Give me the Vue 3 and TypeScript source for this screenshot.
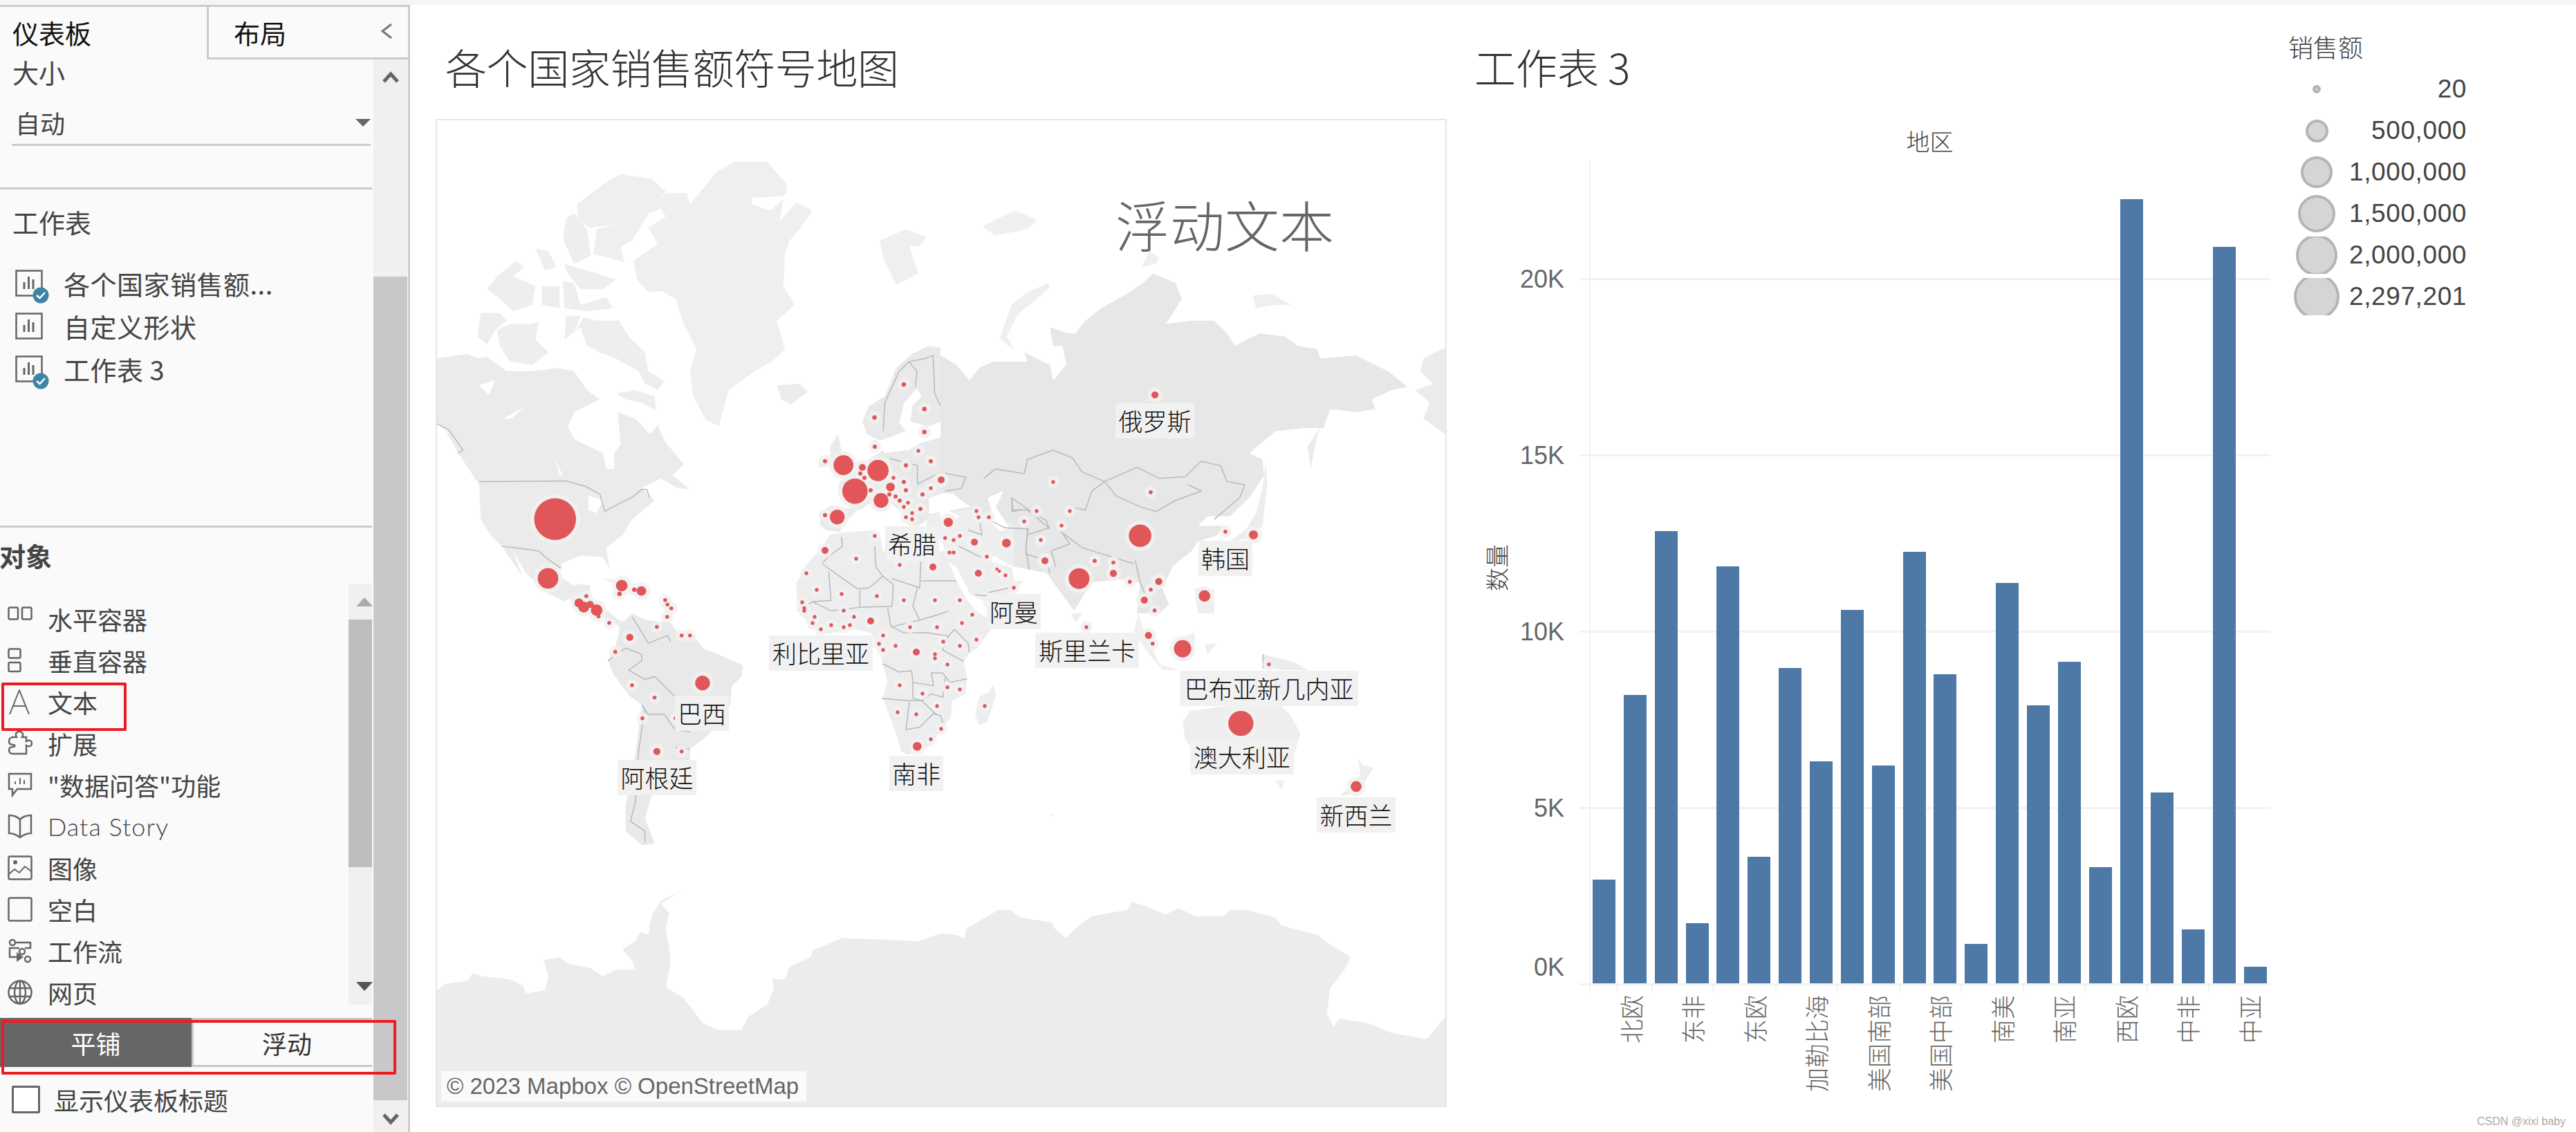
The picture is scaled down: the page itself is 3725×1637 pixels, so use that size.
<script setup lang="ts">
type Dot = number[]
type Shape = { f: string; p: string }
type Zone = { x: number; y: number; s: number; sy: number }

const Z7: Zone = { x: 630, y: 172, s: 1 / 2.148, sy: 1 / 2.193 }
const Z8: Zone = { x: 1360, y: 172, s: 1 / 2.148, sy: 1 / 2.193 }
const Z9: Zone = { x: 630, y: 887, s: 1 / 2.148, sy: 1 / 2.193 }
const Z10: Zone = { x: 1360, y: 887, s: 1 / 2.148, sy: 1 / 2.193 }
const Z12: Zone = { x: 1100, y: 640, s: 1 / 3, sy: 1 / 3 }
const tf = (z: Zone) => `translate(${z.x} ${z.y}) scale(${z.s} ${z.sy})`

const layers = [
  {
    t: tf(Z7),
    land: [
      { f: '#efefef', p: '850,195 870,170 930,135 1030,135 1050,160 1090,205 1090,235 1080,245 985,250 980,270 1040,290 1080,255 1068,325 1120,265 1170,290 1130,350 1100,385 1085,430 1080,530 1115,590 1060,640 1085,730 1045,770 990,800 910,860 880,975 840,955 800,880 790,800 810,730 770,650 745,570 700,545 660,550 625,510 615,450 690,395 660,345 715,310 700,285 660,300 715,235 780,235 790,270 840,210' },
      { f: '#efefef', p: '440,270 530,200 575,175 670,190 715,230 665,295 610,385 575,405 585,455 520,435 490,430 500,350 560,335 480,345 440,320' },
      { f: '#eeeeee', p: '405,315 430,300 470,350 482,435 430,460 395,380' },
      { f: '#eeeeee', p: '310,410 350,420 375,470 340,480' },
      { f: '#eeeeee', p: '160,540 190,500 250,450 275,470 240,500 310,530 300,590 240,610 200,570' },
      { f: '#eeeeee', p: '330,530 385,530 385,600 330,590' },
      { f: '#eeeeee', p: '395,515 430,520 450,590 530,565 550,600 470,610 400,600' },
      { f: '#eeeeee', p: '400,460 470,480 560,510 520,540 450,540 410,490' },
      { f: '#eeeeee', p: '140,615 200,615 220,640 185,670 160,715 130,690' },
      { f: '#eeeeee', p: '190,670 230,650 300,650 320,640 310,700 350,740 300,780 230,770 200,720' },
      { f: '#eeeeee', p: '405,625 450,625 430,680 460,630 500,640 570,640 600,690 650,740 660,800 710,830 690,860 650,840 630,800 560,760 510,740 470,720 450,660 400,700' },
      { f: '#ebebeb', p: '0,760 100,745 130,760 160,755 220,800 300,800 380,790 430,800 470,860 510,890 430,930 410,975 430,1015 520,1060 530,1110 555,1110 555,1060 575,1030 565,930 620,950 665,1000 690,970 710,1020 770,1095 735,1130 790,1175 750,1170 700,1140 640,1170 680,1210 610,1270 580,1320 530,1360 540,1430 520,1390 450,1385 390,1410 385,1450 450,1495 400,1530 340,1500 280,1440 240,1370 270,1450 205,1355 170,1320 140,1270 135,1160 70,1060 30,985 0,965' },
      { f: '#eeeeee', p: '560,870 620,860 680,880 685,925 640,900 590,890' },
      { f: '#ebebeb', p: '385,1440 400,1500 440,1475 480,1480 475,1530 520,1550 570,1590 610,1600 590,1620 540,1590 480,1560 420,1530' },
      { f: '#efefef', p: '510,1455 570,1465 610,1490 560,1475' },
      { f: '#efefef', p: '610,1490 660,1500 640,1510' },
      { f: '#efefef', p: '1380,385 1460,350 1525,375 1500,405 1470,400 1500,490 1430,525 1390,440' },
      { f: '#ececec', p: '1060,845 1130,840 1155,865 1105,905 1075,890' },
      { f: '#ebebeb', p: '1225,1040 1250,1000 1262,1060 1295,1110 1260,1130 1230,1110' },
      { f: '#ebebeb', p: '1190,1080 1225,1065 1225,1100 1190,1105' },
      { f: '#e9e9e9', p: '1325,960 1345,910 1395,880 1430,790 1480,745 1530,720 1568,725 1568,960 1530,975 1475,960 1480,910 1510,880 1495,855 1455,900 1440,965 1460,990 1410,1010 1380,1020 1340,1000' },
      { f: '#eaeaea', p: '1195,1250 1230,1225 1310,1240 1270,1280 1255,1310 1215,1305 1195,1290' },
      { f: '#e9e9e9', p: '1290,1235 1250,1180 1255,1150 1330,1090 1390,1050 1350,1020 1370,1020 1395,1060 1470,1050 1500,1030 1568,1010 1600,1290 1540,1260 1500,1290 1470,1290 1450,1250 1410,1215 1360,1210 1320,1240' },
    ],
    water: [
      '135,845 185,828 165,875',
      '210,950 275,915 235,950',
      '370,1080 395,1130 385,1130',
      '475,1195 520,1210 500,1250 475,1240',
    ],
    lines: [
      '135,1150 150,1150 405,1148 465,1165 510,1190 525,1245 560,1225 610,1200 640,1175 655,1175 665,1200',
      '205,1355 250,1360 320,1370 340,1390 390,1425',
      '0,965 40,985 85,1050 70,1060',
      '1390,990 1395,900 1440,800 1470,770 1495,800 1490,850',
      '1470,770 1520,760 1545,750 1550,870 1568,910',
    ],
  },
  {
    t: tf(Z8),
    land: [
      { f: '#e7e7e7', p: '0,750 50,780 90,830 120,790 160,770 240,770 270,770 260,740 340,780 350,830 390,780 380,720 350,720 340,660 395,680 420,680 450,640 500,600 570,560 630,520 660,490 730,520 750,570 700,650 780,640 850,640 890,680 915,720 990,680 1070,690 1110,720 1170,730 1180,760 1290,750 1390,800 1450,850 1400,860 1340,890 1350,920 1290,930 1210,920 1190,980 1130,980 1040,990 960,1060 1000,1080 1005,1130 960,1200 900,1260 830,1260 800,1290 880,1290 860,1320 800,1340 780,1370 720,1420 690,1490 710,1540 680,1568 610,1568 620,1470 560,1460 470,1470 415,1560 350,1470 330,1440 230,1420 210,1400 140,1380 60,1310 0,1320' },
      { f: '#efefef', p: '335,520 340,535 240,620 205,690 230,730 210,720 185,695 220,590 270,550' },
      { f: '#efefef', p: '970,560 1030,555 1090,590 1040,590 980,600' },
      { f: '#f0f0f0', p: '130,340 230,290 300,320 270,350 170,370' },
      { f: '#ededed', p: '1010,1090 1015,1160 1000,1290 960,1330 900,1340 950,1300 980,1250 1000,1170' },
      { f: '#ebebeb', p: '1215,920 1170,1000 1150,1110 1140,1040' },
      { f: '#ebebeb', p: '1568,725 1500,760 1490,800 1530,840 1475,860 1520,900 1500,950 1568,1000' },
      { f: '#efefef', p: '625,470 650,420 680,440 670,460' },
      { f: '#eeeeee', p: '790,1490 850,1490 850,1568 800,1568' },
    ],
    water: ['0,1230 60,1260 20,1290 0,1270'],
    lines: [
      '135,1140 170,1110 260,1125 270,1080 350,1050 410,1075 440,1120 510,1150 470,1180 450,1240 400,1230',
      '510,1150 610,1105 680,1140 760,1135 810,1085 870,1100 890,1150 945,1160 930,1200 850,1270',
      '510,1150 545,1195 620,1230 670,1245 730,1210 810,1180 770,1160',
      '605,1400 620,1470 650,1540',
      '220,1200 225,1240 270,1240 340,1300',
      '375,1310 440,1360 600,1410',
      '270,1300 265,1380 330,1400 340,1440',
    ],
  },
  {
    t: tf(Z9),
    land: [
      { f: '#e9e9e9', p: '570,40 610,0 650,20 730,30 750,60 800,70 830,110 900,140 955,165 950,200 920,230 915,290 860,370 830,400 790,430 790,470 700,480 670,580 650,650 680,730 640,735 590,690 590,610 620,450 640,290 600,260 550,190 535,150 560,100 570,60' },
      { f: '#ececec', p: '0,1200 30,1175 100,1165 115,1140 140,1150 230,1160 270,1180 280,1205 340,1195 350,1150 335,1100 385,1090 410,1110 480,1125 520,1150 560,1130 620,1130 610,1100 580,1065 620,1040 635,1010 660,1020 670,960 700,910 765,880 700,920 725,950 715,1000 725,1060 730,1110 715,1185 770,1220 830,1300 875,1320 950,1322 970,1280 1030,1240 1050,1190 1045,1160 1085,1160 1100,1120 1165,1090 1170,1070 1260,1030 1400,1035 1500,1040 1568,1015 1568,1600 0,1600' },
    ],
    water: [],
    lines: [
      '610,10 640,60 660,95 720,70 730,90',
      '535,150 590,110 640,130 640,150 600,180 650,210 680,200 730,250 745,265',
      '640,290 660,320 710,320 745,370 790,375',
      '650,300 630,440 620,600 605,660 650,690 650,725',
      '745,425 790,430',
    ],
  },
  {
    t: tf(Z10),
    land: [
      { f: '#ececec', p: '0,1015 50,1020 75,1030 80,1000 130,970 180,940 215,940 250,965 345,980 355,1000 390,1030 430,990 470,960 580,940 595,915 640,930 700,955 740,935 790,960 880,960 900,940 950,940 1040,965 1060,990 1170,1020 1210,1050 1275,1090 1255,1130 1210,1190 1200,1270 1220,1310 1240,1285 1330,1300 1400,1330 1510,1350 1568,1280 1568,1570 0,1570' },
      { f: '#eeeeee', p: '752,345 775,310 880,295 1060,295 1085,320 1118,380 1100,440 1060,500 1000,500 900,480 780,430 760,400' },
      { f: '#efefef', p: '1040,530 1070,530 1058,560' },
      { f: '#eeeeee', p: '1295,455 1310,480 1345,490 1320,530 1290,570 1240,580 1280,540 1305,510' },
      { f: '#eeeeee', p: '165,225 172,260 145,345 120,355 108,320 120,265 150,250' },
      { f: '#f0f0f0', p: '615,0 630,50 680,160 740,180 690,180 640,120 600,60' },
      { f: '#f0f0f0', p: '720,90 790,60 790,130 740,150' },
      { f: '#f0f0f0', p: '820,100 860,95 830,130' },
      { f: '#ececec', p: '1000,130 1100,155 1140,180 1060,180 1000,170' },
      { f: '#f0f0f0', p: '340,635 358,640 345,645' },
      { f: '#eeeeee', p: '405,0 440,0 420,30' },
    ],
    water: [],
    lines: ['1002,130 1002,175'],
  },
  {
    t: tf(Z12),
    land: [
      { f: '#ededed', p: '255,470 300,400 360,390 490,380 520,420 530,470 620,480 700,480 800,470 820,530 850,600 880,650 930,730 980,760 1000,810 940,890 905,915 880,950 895,1020 890,1090 830,1120 825,1190 780,1250 730,1320 640,1355 610,1340 590,1270 560,1190 530,1110 550,1040 530,960 510,890 480,825 400,810 280,830 225,800 160,730 155,610 205,520' },
      { f: '#eeeeee', p: '720,320 800,300 900,290 1000,340 1100,350 1100,540 1060,520 1010,490 960,480 990,510 1090,545 1100,600 1140,600 1090,650 985,690 930,670 880,640 840,570 800,490 790,420 720,370' },
      { f: '#eeeeee', p: '1395,775 1430,790 1425,815 1400,815' },
    ],
    water: [
      '730,240 790,220 830,220 910,280 870,285 800,300 730,310',
      '985,240 1050,210 1040,240 1020,280 1080,370 1040,385 990,340 1000,290',
      '815,520 850,540 905,650 930,720 900,690 860,620',
    ],
    lines: [
      '265,525 420,635 470,630 530,580 500,540 495,450',
      '295,560 305,685 225,690',
      '530,580 575,615 570,710 430,715 430,640',
      '570,590 690,630 695,500',
      '695,600 850,600',
      '680,630 660,710 690,770 565,800 550,715',
      '815,730 790,740 690,770',
      '570,800 620,825 725,825 815,840 840,810 900,870 905,910',
      '815,840 790,900 880,950',
      '530,960 600,995 655,990 660,1040 750,1055 740,1000 790,1000 820,1040 895,1025',
      '525,1110 640,1120 700,1120 740,1090 790,1105 800,1020',
      '645,1125 630,1245 690,1235 750,1175 780,1185 790,1215',
      '660,1040 660,1110 700,1120',
      '700,1120 760,1180',
      '160,730 225,690 305,730 430,715',
      '560,70 680,100 680,180 780,130 890,150 870,200 800,210',
      '900,380 960,400 950,350',
      '860,450 960,500',
      '1160,370 1150,460 1165,550',
      '1090,240 1160,290 1240,340 1250,370 1160,400',
      '1300,380 1340,440 1260,470 1280,540',
      '1090,240 1090,300 1130,290',
      '930,660 985,665',
      '990,650 1080,630',
      '1000,340 1060,370 1160,375',
      '350,410 355,450 300,490 270,520',
    ],
  },
]

const conv = (z: Zone, list: Dot[]) =>
  list.map(([x, y, r]) => ({ x: z.x + x * z.s, y: z.y + y * z.sy, r: r * z.s }))

const dots = [
  ...conv(Z12, [
    [359, 98, 43], [509, 121, 46], [409, 211, 55], [522, 251, 32], [332, 323, 32], [441, 108, 15], [279, 81, 9], [279, 315, 9],
    [432, 134, 9], [450, 153, 9], [477, 207, 9], [558, 225, 9], [576, 153, 8], [630, 99, 9], [684, 36, 8], [738, 81, 9], [495, 18, 9],
    [783, 162, 15], [621, 171, 9], [702, 225, 9], [738, 198, 8], [630, 207, 9], [585, 234, 9], [603, 252, 9], [639, 261, 8], [693, 288, 9],
    [657, 306, 8], [621, 279, 8], [630, 324, 8], [657, 333, 8], [563, 193, 19], [814, 346, 20], [936, 297, 8], [945, 324, 8], [990, 324, 8],
    [864, 405, 8], [800, 414, 8], [837, 423, 8], [819, 477, 8], [837, 477, 8], [927, 432, 15], [1066, 436, 19], [981, 495, 8], [1025, 549, 7],
    [1035, 558, 7], [1062, 576, 8], [944, 567, 15], [1098, 630, 8], [990, 693, 8], [1233, 513, 15], [1215, 423, 8], [1143, 342, 8], [1197, 297, 8],
    [1341, 297, 8], [1305, 360, 8], [1269, 171, 8], [1381, 590, 45], [1449, 513, 8], [1413, 801, 8], [279, 468, 15], [495, 405, 8], [414, 504, 8],
    [603, 531, 8], [747, 540, 15], [198, 567, 8], [243, 639, 8], [351, 657, 8], [504, 666, 8], [621, 684, 8], [756, 684, 8], [864, 684, 8],
    [918, 747, 8], [873, 783, 8], [936, 855, 8], [180, 693, 8], [189, 718, 8], [189, 730, 8], [234, 756, 8], [225, 783, 8], [261, 810, 8],
    [306, 792, 8], [360, 729, 8], [360, 801, 8], [387, 792, 8], [405, 756, 8], [477, 774, 15], [531, 837, 8], [513, 873, 8], [531, 900, 8],
    [585, 882, 8], [675, 909, 15], [648, 801, 8], [765, 801, 8], [792, 864, 8], [864, 882, 8], [756, 918, 8], [756, 936, 8], [810, 963, 8],
    [603, 1053, 8], [702, 1089, 8], [810, 1062, 8], [864, 1071, 8], [765, 1143, 8], [594, 1170, 8], [675, 1179, 8], [783, 1242, 8], [738, 1287, 8],
    [679, 1318, 19], [972, 1143, 8],
  ]),
  ...conv(Z8, [
    [666, 875, 11], [653, 1184, 6], [620, 1322, 35], [885, 1309, 6], [972, 1319, 14], [537, 1407, 6], [537, 1441, 11], [479, 1402, 6], [588, 1468, 6],
    [678, 1467, 11], [653, 1493, 6], [633, 1526, 11], [820, 1513, 18], [665, 1559, 6],
  ]),
  ...conv(Z10, [[646, 70, 11], [659, 96, 6], [752, 112, 27], [1020, 162, 6], [933, 349, 39], [1291, 549, 17]]),
  ...conv(Z9, [
    [829, 221, 23], [603, 76, 11], [687, 43, 6], [764, 70, 6], [790, 70, 6], [558, 122, 6], [610, 228, 6], [680, 267, 6], [642, 333, 6],
    [745, 333, 6], [687, 438, 11], [764, 438, 6], [539, 30, 6], [506, 10, 6], [719, 11, 6],
  ]),
  ...conv(Z7, [
    [371, 1269, 65], [349, 1457, 32], [578, 1480, 18], [571, 1506, 7], [617, 1493, 7], [639, 1497, 15], [713, 1526, 6], [720, 1540, 6], [732, 1552, 6],
    [468, 1513, 6], [445, 1535, 14], [460, 1548, 17], [480, 1540, 11], [500, 1558, 18], [1454, 842, 7], [1518, 920, 7], [1363, 947, 7], [1518, 993, 7],
  ]),
]

const OX = 632
const OY = 174
const places = [
  { n: '俄罗斯', x: 1613, y: 583, w: 114 },
  { n: '希腊', x: 1280, y: 761, w: 78 },
  { n: '韩国', x: 1733, y: 782, w: 78 },
  { n: '阿曼', x: 1427, y: 859, w: 78 },
  { n: '利比里亚', x: 1112, y: 919, w: 150 },
  { n: '斯里兰卡', x: 1497, y: 915, w: 150 },
  { n: '巴布亚新几内亚', x: 1706, y: 970, w: 258 },
  { n: '巴西', x: 976, y: 1006, w: 78 },
  { n: '澳大利亚', x: 1721, y: 1069, w: 150 },
  { n: '南非', x: 1286, y: 1093, w: 78 },
  { n: '阿根廷', x: 893, y: 1099, w: 114 },
  { n: '新西兰', x: 1904, y: 1153, w: 114 },
].map((p) => ({ ...p, style: { left: `${p.x - OX}px`, top: `${p.y - OY}px`, width: `${p.w}px` } }))

const tops = [1273, 1006, 769, 1336, 820, 1240, 967, 1102, 883, 1108, 799, 976, 1366, 844, 1021, 958, 1255, 289, 1147, 1345, 358, 1399]
const names = ['', '北欧', '', '东非', '', '东欧', '', '加勒比海', '', '美国南部', '', '美国中部', '', '南美', '', '南亚', '', '西欧', '', '中非', '', '中亚']
const bars = tops.map((t, i) => ({ name: names[i], h: 1423 - t, tick: i < 3 || i % 2 === 0 }))
const yTicks = [0, 5, 10, 15, 20].map((k) => ({ label: `${k}K`, bottom: k * 51 - 1.5 }))

const legend = [
  { v: '20', d: 12 },
  { v: '500,000', d: 33 },
  { v: '1,000,000', d: 46 },
  { v: '1,500,000', d: 54 },
  { v: '2,000,000', d: 60 },
  { v: '2,297,201', d: 66 },
]
const sheets = [
  { n: '各个国家销售额...', done: true },
  { n: '自定义形状', done: false },
  { n: '工作表 3', done: true },
]
const objects = ['水平容器', '垂直容器', '文本', '扩展', '"数据问答"功能', 'Data Story', '图像', '空白', '工作流', '网页']
</script>

<template>
  <div class="page">
    <div class="strip"></div>
    <div class="body">
      <aside class="side">
        <div class="tabs">
          <div class="tab active">仪表板</div>
          <div class="tab other">
            <span>布局</span>
            <svg class="collapse" viewBox="0 0 18 24"><path d="M16 2 L3 12 L16 22" fill="none" stroke="#777" stroke-width="3" /></svg>
          </div>
        </div>
        <div class="side-main">
          <div class="panel">
            <section class="size">
              <div class="h">大小</div>
              <div class="select"><span>自动</span><i class="caret"></i></div>
            </section>
            <section class="sheets">
              <div class="h">工作表</div>
              <ul class="sheet-list">
                <li v-for="s in sheets" :key="s.n">
                  <svg class="sheet-ico" viewBox="0 0 50 50">
                    <rect x="1.5" y="1.5" width="37" height="36" fill="none" stroke="#666" stroke-width="2.5" />
                    <path d="M13 28V18 M19.500 28V10 M26 28V14" stroke="#666" stroke-width="3" />
                    <template v-if="s.done">
                      <circle cx="37" cy="37" r="11.500" fill="#3f84a4" />
                      <path d="M31 37 L35.500 41 L43 33" fill="none" stroke="#fff" stroke-width="2.500" />
                    </template>
                  </svg>
                  <span>{{ s.n }}</span>
                </li>
              </ul>
            </section>
            <section class="objects">
              <div class="obj-h">对象</div>
              <div class="obj-wrap">
                <ul class="obj-list">
                  <li v-for="(o, i) in objects" :key="o" :class="{ latin: o === 'Data Story', marked: i === 2 }">
                    <svg class="ico" viewBox="0 0 36 36" fill="none" stroke="#666" stroke-width="2.500">
                      <g v-if="i === 0"><rect x="1.500" y="1.500" width="13.500" height="17" rx="2" /><rect x="21" y="1.500" width="13.500" height="17" rx="2" /></g>
                      <g v-else-if="i === 1"><rect x="1.500" y="1.500" width="17" height="13" rx="2" /><rect x="1.500" y="21" width="17" height="13" rx="2" /></g>
                      <path v-else-if="i === 2" d="M3 36 L17 1 L31 36 M8 24 H26" stroke-width="2" />
                      <path v-else-if="i === 3" d="M13 9 C10 3 14 1 17 1 C20 1 24 3 21 9 H27 V15 C32 12 35 15 35 18 C35 21 32 24 27 21 V33 H7 C3 33 2 30 2 27 C2 25 4 23 8 23 C11 23 11 20 8 20 C4 20 2 18 2 15 C2 11 5 9 8 9 Z" />
                      <g v-else-if="i === 4"><path d="M2 2 H34 V24 H14 L7 33 V24 H2 Z" /><path d="M11 17V13 M18 17V8 M24 17V11" stroke-width="2" /></g>
                      <g v-else-if="i === 5"><path d="M18 8 C14 4 8 2 2 2 V28 C8 28 14 31 18 34 C22 31 28 28 34 28 V2 C28 2 22 4 18 8 Z M18 8 V34" /></g>
                      <g v-else-if="i === 6"><rect x="1.500" y="1.500" width="33" height="33" rx="2" /><circle cx="11" cy="10" r="3" fill="#666" stroke="none" /><path d="M2 27 L10 20 L17 25 L25 16 L34 23" stroke-width="2" /></g>
                      <rect v-else-if="i === 7" x="1.500" y="1.500" width="33" height="33" rx="2" />
                      <g v-else-if="i === 8">
                        <circle cx="7" cy="6" r="4" /><circle cx="21" cy="19" r="4" /><circle cx="29" cy="30" r="4" />
                        <path d="M11 6 H33 V14 H25 M17 14 H3 V27 H13" />
                        <path d="M13 20 L23 27 L13 34 Z" fill="#666" stroke="none" />
                      </g>
                      <g v-else><circle cx="18" cy="18" r="16.500" /><ellipse cx="18" cy="18" rx="8" ry="16.500" /><path d="M2 12 H34 M2 24 H34 M18 2 V34" /></g>
                    </svg>
                    <span>{{ o }}</span>
                  </li>
                </ul>
                <div class="mini-bar">
                  <i class="up"></i>
                  <i class="thumb"></i>
                  <i class="down"></i>
                </div>
              </div>
              <div class="mode">
                <div class="mode-a">平铺</div>
                <div class="mode-b">浮动</div>
              </div>
              <label class="show"><i class="box"></i><span>显示仪表板标题</span></label>
            </section>
          </div>
          <div class="bar">
            <svg class="arrow" viewBox="0 0 24 20"><path d="M2 17 L12 6 L22 17" fill="none" stroke="#666" stroke-width="5" /></svg>
            <div class="bar-thumb"></div>
            <svg class="arrow dn" viewBox="0 0 24 20"><path d="M2 3 L12 14 L22 3" fill="none" stroke="#666" stroke-width="5" /></svg>
          </div>
        </div>
      </aside>

      <main class="main">
        <div class="map-col">
          <h1 class="title map-title">各个国家销售额符号地图</h1>
          <div class="map">
            <svg class="map-svg" viewBox="632 174 1458 1425" width="1458" height="1425">
              <g v-for="(l, i) in layers" :key="i" :transform="l.t">
                <polygon v-for="(s, j) in (l.land as Shape[])" :key="j" :points="s.p" :fill="s.f" />
              </g>
              <g v-for="(l, i) in layers" :key="'w' + i" :transform="l.t">
                <polygon v-for="(p, j) in l.water" :key="j" :points="p" fill="#fff" />
              </g>
              <g v-for="(l, i) in layers" :key="'l' + i" :transform="l.t">
                <polyline v-for="(p, j) in l.lines" :key="j" :points="p" fill="none" stroke="#b9b9b9" stroke-width="1.500" vector-effect="non-scaling-stroke" />
              </g>
              <circle v-for="(d, i) in dots" :key="'h' + i" :cx="d.x" :cy="d.y" :r="d.r + 6" fill="#f1f1f1" fill-opacity="0.85" />
              <circle v-for="(d, i) in dots" :key="'d' + i" :cx="d.x" :cy="d.y" :r="d.r" fill="#e15759" />
            </svg>
            <span v-for="p in places" :key="p.n" class="place" :style="p.style">{{ p.n }}</span>
            <div class="float-text">浮动文本</div>
            <div class="credit">© 2023 Mapbox © OpenStreetMap</div>
          </div>
        </div>

        <div class="chart-col">
          <h1 class="title chart-title">工作表 3</h1>
          <div class="region">地区</div>
          <div class="chart">
            <div class="axis-name"><span>数量</span></div>
            <div class="plot">
              <div v-for="t in yTicks" :key="t.label" class="grid" :style="{ bottom: t.bottom + 'px' }">
                <span>{{ t.label }}</span>
              </div>
              <div class="bars">
                <div v-for="(b, i) in bars" :key="i" class="cell">
                  <div class="rect" :style="{ height: b.h + 'px' }"></div>
                </div>
              </div>
            </div>
          </div>
          <div class="x-axis">
            <div v-for="(b, i) in bars" :key="i" class="x-cell" :class="{ tick: b.tick }">
              <span v-if="b.name">{{ b.name }}</span>
            </div>
          </div>
        </div>

        <div class="legend">
          <div class="legend-h">销售额</div>
          <div v-for="r in legend" :key="r.v" class="legend-row">
            <div class="slot"><i :style="{ width: r.d + 'px', height: r.d + 'px' }"></i></div>
            <span>{{ r.v }}</span>
          </div>
        </div>
      </main>
    </div>
    <div class="mark">CSDN @xixi baby</div>
  </div>
</template>

<style>
html,
body {
  margin: 0;
  background: #fff;
}
</style>

<style scoped>
* {
  box-sizing: border-box;
}
.page {
  position: relative;
  width: 3725px;
  height: 1637px;
  overflow: hidden;
  display: flex;
  flex-direction: column;
  font-family: "Noto Sans CJK SC", "Noto Sans", sans-serif;
  background: #fff;
}
.strip {
  height: 7px;
  background: #f5f5f5;
  flex: none;
}
.body {
  flex: 1;
  display: flex;
  min-height: 0;
}
.side {
  width: 593px;
  flex: none;
  display: flex;
  flex-direction: column;
  background: #fafafa;
  border-top: 3px solid #ccc;
  border-right: 3px solid #ccc;
  color: #444;
}
.tabs {
  height: 76px;
  flex: none;
  display: flex;
}
.tab {
  font-size: 38px;
  line-height: 74px;
}
.active {
  width: 302px;
  padding-left: 18px;
  color: #111;
  border-right: 3px solid #ccc;
}
.other {
  flex: 1;
  position: relative;
  padding-left: 36px;
  color: #111;
  border-bottom: 3px solid #ccc;
}
.collapse {
  position: absolute;
  left: 248px;
  top: 23px;
  width: 18px;
  height: 24px;
}
.side-main {
  flex: 1;
  display: flex;
  min-height: 0;
}
.panel {
  width: 538px;
  flex: none;
  display: flex;
  flex-direction: column;
}
.h {
  font-size: 38px;
  line-height: 40px;
  padding-left: 18px;
}
.size {
  height: 188px;
  border-bottom: 3px solid #ccc;
}
.size .h {
  margin-top: -2px;
}
.select {
  margin: 30px 2px 0 17px;
  height: 57px;
  display: flex;
  align-items: center;
  justify-content: space-between;
  padding: 0 0 8px 5px;
  font-size: 36px;
  border-bottom: 3px solid #ccc;
}
.caret {
  width: 0;
  height: 0;
  border-left: 11px solid transparent;
  border-right: 11px solid transparent;
  border-top: 11px solid #666;
}
.sheets {
  height: 489px;
  padding-top: 27px;
  border-bottom: 3px solid #ccc;
}
.sheet-list {
  list-style: none;
  margin: 37px 0 0;
  padding: 0 0 0 22px;
}
.sheet-list li {
  height: 62px;
  display: flex;
  align-items: center;
  font-size: 38px;
  letter-spacing: 0.5px;
}
.sheet-ico {
  width: 50px;
  height: 50px;
  flex: none;
  margin-right: 20px;
  position: relative;
  top: 6px;
}
.objects {
  flex: 1;
  min-height: 0;
}
.obj-h {
  font-size: 38px;
  font-weight: 700;
  line-height: 40px;
  margin-top: 20px;
  margin-left: -1px;
}
.obj-wrap {
  display: flex;
  justify-content: space-between;
  height: 609px;
  margin-top: 21px;
}
.obj-list {
  list-style: none;
  margin: 0;
  padding: 21px 0 0 11px;
}
.obj-list li {
  height: 60px;
  display: flex;
  align-items: center;
  gap: 22px;
  font-size: 36px;
  white-space: nowrap;
  position: relative;
}
.marked::after {
  content: "";
  position: absolute;
  left: -9px;
  top: 2px;
  width: 173px;
  height: 62px;
  border: 4px solid #ed1c24;
  border-radius: 2px;
}
.latin span {
  font-family: "Lato", sans-serif;
  font-weight: 300;
  letter-spacing: 1px;
}
.ico {
  width: 36px;
  height: 36px;
  flex: none;
}
.mini-bar {
  width: 34px;
  position: relative;
  background: #f0f0f0;
}
.mini-bar i {
  position: absolute;
  display: block;
}
.up {
  left: 11px;
  top: 20px;
  width: 0;
  height: 0;
  border-left: 12px solid transparent;
  border-right: 12px solid transparent;
  border-bottom: 13px solid #aaa;
}
.mini-bar .thumb {
  left: 0;
  right: 0;
  top: 52px;
  height: 358px;
  background: #bdbdbd;
}
.down {
  left: 11px;
  bottom: 20px;
  width: 0;
  height: 0;
  border-left: 12px solid transparent;
  border-right: 12px solid transparent;
  border-top: 13px solid #555;
}
.mode {
  height: 71px;
  margin-top: 19px;
  display: flex;
  font-size: 36px;
  position: relative;
}
.mode::after {
  content: "";
  position: absolute;
  left: 2px;
  top: 3px;
  width: 563px;
  height: 71px;
  border: 4px solid #ed1c24;
  border-radius: 2px;
  z-index: 3;
  pointer-events: none;
}
.mode-a {
  width: 277px;
  background: #666;
  color: #fff;
  text-align: center;
  line-height: 72px;
}
.mode-b {
  flex: 1;
  border: 3px solid #c8c8c8;
  border-right: 0;
  border-top-width: 5px;
  padding-left: 12px;
  color: #333;
  text-align: center;
  line-height: 62px;
}
.show {
  display: flex;
  align-items: center;
  height: 40px;
  margin-top: 27px;
  padding-left: 17px;
  font-size: 36px;
}
.box {
  width: 41px;
  height: 40px;
  background: #fff;
  border: 3px solid #666;
  border-radius: 2px;
  margin-right: 20px;
}
.bar {
  width: 49px;
  flex: none;
  margin-left: 2px;
  display: flex;
  flex-direction: column;
  background: #f0f0f0;
  position: relative;
}
.arrow {
  position: absolute;
  left: 13px;
  top: 15px;
  width: 24px;
  height: 20px;
}
.arrow.dn {
  top: auto;
  bottom: 8px;
  z-index: 2;
}
.bar-thumb {
  margin-top: 314px;
  height: 1191px;
  background: #c8c8c8;
}
.main {
  flex: 1;
  display: flex;
  min-width: 0;
}
.title {
  margin: 0;
  font-size: 60px;
  font-weight: 300;
  line-height: 60px;
  color: #333;
  white-space: nowrap;
}
.map-col {
  width: 1462px;
  margin-left: 37px;
  flex: none;
  padding-top: 59px;
}
.map-title {
  padding-left: 14px;
  letter-spacing: -0.4px;
}
.map {
  position: relative;
  width: 1462px;
  height: 1429px;
  margin-top: 46px;
  border: 2px solid #e6e6e6;
  overflow: hidden;
}
.map-svg {
  display: block;
}
.place {
  position: absolute;
  height: 51px;
  line-height: 49px;
  text-align: center;
  font-size: 35px;
  font-weight: 300;
  white-space: nowrap;
  color: #111;
  background: #f1f1f1;
}
.float-text {
  position: absolute;
  left: 981px;
  top: 105px;
  font-size: 79px;
  font-weight: 300;
  line-height: 90px;
  color: #666;
  white-space: nowrap;
}
.credit {
  position: absolute;
  left: 6px;
  bottom: 6px;
  width: 528px;
  height: 44px;
  padding-left: 8px;
  line-height: 44px;
  background: #fafafa;
  font-family: "Liberation Sans", sans-serif;
  font-size: 33px;
  color: #666;
  white-space: nowrap;
}
.chart-col {
  width: 1173px;
  margin-left: 18px;
  flex: none;
  padding-top: 59px;
}
.chart-title {
  padding-left: 22px;
}
.region {
  margin-top: 58px;
  padding-left: 188px;
  text-align: center;
  font-size: 34px;
  font-weight: 300;
  line-height: 40px;
  color: #444;
}
.chart {
  display: flex;
  margin-top: 8px;
}
.axis-name {
  width: 188px;
  height: 1191px;
  flex: none;
  padding-left: 34px;
  display: flex;
  align-items: center;
  font-size: 34px;
  font-weight: 300;
  color: #444;
}
.axis-name span {
  writing-mode: vertical-rl;
  text-orientation: sideways;
  transform: rotate(180deg);
  line-height: 40px;
  margin-top: -14px;
}
.plot {
  position: relative;
  width: 985px;
  height: 1191px;
  border-left: 2px solid #f2f2f2;
}
.grid {
  position: absolute;
  left: -16px;
  right: 0;
  height: 3px;
  background: #f2f2f2;
}
.grid span {
  position: absolute;
  right: 1021px;
  top: -20px;
  font-family: "Liberation Sans", sans-serif;
  font-size: 36px;
  line-height: 44px;
  color: #666;
}
.grid:first-child span {
  top: -45px;
}
.bars {
  position: absolute;
  top: 0;
  bottom: 0;
  left: -3px;
  right: -1px;
  display: flex;
  align-items: flex-end;
  padding-bottom: 1px;
}
.cell {
  flex: 1;
  display: flex;
  justify-content: center;
}
.rect {
  width: 33px;
  background: #4e79a7;
}
.x-axis {
  display: flex;
  width: 985px;
  margin-left: 188px;
  height: 190px;
}
.x-cell {
  flex: 1;
  position: relative;
  padding: 16px 10px 0 0;
  display: flex;
  justify-content: center;
  align-items: flex-start;
  font-size: 35px;
  font-weight: 300;
  color: #666;
}
.x-cell.tick::before {
  content: "";
  position: absolute;
  left: 0;
  top: 0;
  width: 2px;
  height: 12px;
  background: #f2f2f2;
}
.x-cell span {
  writing-mode: vertical-rl;
  text-orientation: sideways;
  transform: rotate(180deg);
  white-space: nowrap;
  line-height: 40px;
}
.legend {
  width: 260px;
  margin-left: 26px;
  flex: none;
  padding-top: 40px;
}
.legend-h {
  font-size: 36px;
  font-weight: 300;
  line-height: 40px;
  color: #444;
  margin-bottom: 12px;
}
.legend-row {
  height: 60px;
  width: 258px;
  display: flex;
  align-items: center;
  justify-content: space-between;
  font-family: "Liberation Sans", sans-serif;
  font-size: 37px;
  letter-spacing: 0.6px;
  color: #444;
}
.slot {
  width: 82px;
  height: 54px;
  overflow: hidden;
  display: flex;
  align-items: center;
  justify-content: center;
}
.slot i {
  display: block;
  flex: none;
  border-radius: 50%;
  background: #d5d5d5;
  border: 4px solid #b5b5b5;
}
.mark {
  position: absolute;
  right: 15px;
  bottom: 6px;
  font-family: "Liberation Sans", sans-serif;
  font-size: 16px;
  color: #aaa;
}
</style>
